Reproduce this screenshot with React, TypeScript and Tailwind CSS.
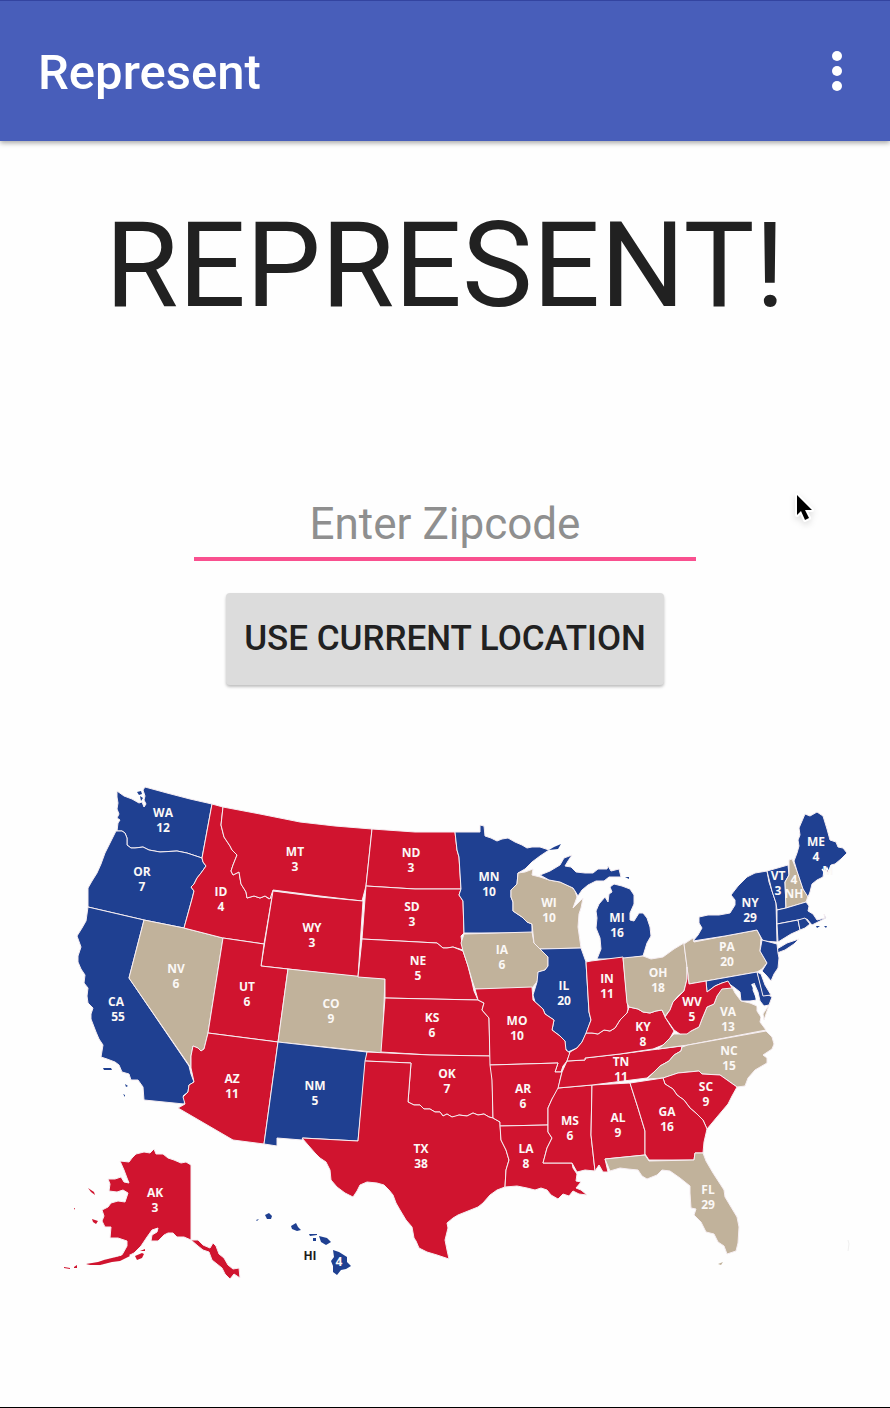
import React from "react";

type Party = "red" | "blue" | "tan";

type Shape = { id: string; party: Party; points: string };

type Label = { name: string; votes: string; x: number; y: number; votesX?: number };

const fills: Record<Party, string> = {
  red: "fill-[#d0142f]",
  blue: "fill-[#1f4091]",
  tan: "fill-[#c1b29b]",
};

const states: Shape[] = [
  { id: "WA", party: "blue", points: "117,791 117,797 118,803 117,809 119,814 117,818 120,820 118,823 117,831 122,831 125,833 127,838 127,845 131,848 135,848 143,847 149,850 160,852 177,851 187,853 202,858 212,804 190,799 167,793 145,787 143,790 145,796 144,800 146,804 144,807 142,802 139,803 132,799 124,796" },
  { id: "OR", party: "blue", points: "116,831 122,831 125,833 127,838 127,845 131,848 135,848 143,847 149,850 160,852 177,851 187,853 202,858 203,862 206,866 201,873 197,878 194,884 191,887 194,891 192,899 184,928 144,920 88,907 88,888 92,881 97,873 101,864 105,853 110,843" },
  { id: "CA", party: "blue", points: "88,907 144,920 129,978 189,1066 191,1074 194,1082 189,1085 188,1092 183,1096 185,1100 184,1104 144,1100 143,1087 138,1080 131,1080 129,1074 122,1072 119,1065 115,1062 107,1059 101,1057 103,1045 99,1039 96,1032 91,1019 91,1014 93,1008 88,1003 87,996 88,988 84,983 85,975 81,969 78,962 78,956 81,947 77,936 82,928 86,921" },
  { id: "NV", party: "tan", points: "144,920 184,928 223,938 208,1033 204,1049 201,1051 198,1048 193,1046 191,1056 191,1068 129,978" },
  { id: "ID", party: "red", points: "212,804 223,807 221,825 224,837 230,846 232,850 237,855 233,865 231,871 233,875 239,872 241,884 246,892 247,898 254,896 260,898 265,896 269,899 273,891 264,944 223,938 184,928 192,899 194,891 191,887 194,884 197,878 201,873 206,866 203,862 202,858" },
  { id: "MT", party: "red", points: "223,807 260,814 300,822 335,826 372,829 366,886 362,901 320,896 273,890 270,899 265,896 260,898 254,896 247,898 246,892 241,884 239,872 233,875 231,871 233,865 237,855 232,850 230,846 224,837 221,825" },
  { id: "WY", party: "red", points: "273,891 320,897 363,901 358,977 288,969 261,966" },
  { id: "UT", party: "red", points: "223,938 264,944 261,966 288,969 278,1042 208,1033" },
  { id: "CO", party: "tan", points: "288,969 385,979 382,1053 278,1042" },
  { id: "AZ", party: "red", points: "208,1033 278,1042 264,1144 233,1140 178,1108 185,1104 183,1097 188,1092 189,1085 194,1082 191,1068 191,1056 193,1046 198,1048 201,1051 204,1049" },
  { id: "NM", party: "blue", points: "278,1042 367,1052 358,1141 303,1138 302,1140 277,1138 277,1146 264,1144" },
  { id: "ND", party: "red", points: "372,829 415,832 455,832 457,850 459,857 461,889 415,889 366,886" },
  { id: "SD", party: "red", points: "366,886 415,889 461,889 459,895 463,901 464,933 461,936 463,950 453,947 447,948 443,948 437,943 362,939" },
  { id: "NE", party: "red", points: "362,939 437,943 443,948 447,948 453,947 463,951 468,966 472,982 474,991 478,1000 385,998 385,979 358,977" },
  { id: "KS", party: "red", points: "385,998 478,1000 484,1003 482,1010 489,1018 490,1056 430,1055 381,1052" },
  { id: "OK", party: "red", points: "367,1052 430,1055 490,1056 492,1067 493,1118 489,1117 484,1114 478,1115 473,1113 467,1116 459,1115 455,1117 452,1117 447,1114 443,1116 440,1112 435,1112 430,1109 424,1109 420,1105 414,1105 408,1102 411,1063 365,1061" },
  { id: "TX", party: "red", points: "365,1061 411,1063 408,1102 414,1105 420,1105 424,1109 430,1109 435,1112 440,1112 443,1116 447,1114 452,1117 459,1115 467,1116 473,1113 478,1115 484,1114 489,1117 493,1118 500,1122 501,1140 506,1150 509,1160 506,1170 505,1187 497,1190 490,1195 483,1203 478,1207 468,1211 458,1215 453,1218 447,1223 448,1228 445,1240 447,1250 449,1259 437,1255 427,1252 419,1248 416,1241 414,1238 412,1227 406,1220 400,1210 396,1203 393,1195 389,1190 384,1185 377,1183 367,1182 360,1185 357,1191 353,1197 345,1193 337,1187 331,1180 330,1170 326,1162 320,1158 315,1153 308,1145 302,1138 358,1141" },
  { id: "MN", party: "blue", points: "455,832 480,832 480,825 484,826 485,836 491,838 497,841 502,839 508,838 515,842 522,845 527,848 532,847 540,847 549,850 540,856 532,862 525,869 518,873 517,884 511,890 511,897 513,902 513,911 522,917 527,922 532,924 532,933 464,933 463,901 459,895 461,889 459,857 457,850" },
  { id: "IA", party: "tan", points: "464,934 532,932 534,943 540,949 548,957 548,966 545,970 538,972 539,978 536,983 532,988 475,989 472,980 468,966 463,951 461,943" },
  { id: "WI", party: "tan", points: "518,873 525,872 533,869 532,875 540,877 549,880 560,882 573,888 575,891 577,897 573,908 580,901 583,898 581,908 579,914 578,927 581,948 540,949 534,943 532,924 527,922 522,917 513,911 513,902 511,897 511,890 517,884" },
  { id: "MI-UP", party: "blue", points: "540,875 550,871 560,865 564,858 572,855 568,861 565,866 571,867 576,872 585,873 593,873 598,869 607,869 608,866 611,871 619,869 621,877 609,877 604,881 596,881 588,885 582,890 578,896 575,891 573,888 560,882 549,880" },
  { id: "MI", party: "blue", points: "597,959 601,949 600,938 596,928 597,918 596,911 599,904 605,897 608,902 609,894 612,892 610,887 614,884 622,886 630,889 634,895 634,904 630,913 630,920 634,921 639,913 643,913 647,918 650,927 651,936 647,943 643,956 623,959" },
  { id: "IL", party: "blue", points: "540,949 581,948 586,962 589,1012 591,1020 586,1034 582,1042 577,1048 568,1052 565,1048 565,1041 560,1036 552,1030 554,1020 545,1014 543,1009 535,1002 533,995 537,982 538,972 545,970 548,966 548,957" },
  { id: "MO", party: "red", points: "475,989 532,987 533,1000 543,1009 545,1014 554,1020 552,1030 560,1036 565,1041 566,1050 570,1053 567,1061 563,1066 561,1072 555,1072 558,1063 490,1065 489,1018 482,1010 484,1003 478,1000" },
  { id: "AR", party: "red", points: "490,1065 558,1063 555,1072 562,1072 560,1080 558,1090 552,1099 548,1108 548,1125 500,1126 500,1122 493,1118 492,1080" },
  { id: "LA", party: "red", points: "500,1126 548,1125 548,1132 552,1138 547,1148 543,1163 572,1163 573,1168 577,1174 576,1181 581,1182 576,1188 581,1190 587,1195 579,1194 573,1191 569,1196 563,1194 558,1199 551,1195 547,1190 541,1188 535,1190 527,1188 517,1186 505,1187 506,1170 509,1160 506,1150 501,1140" },
  { id: "MS", party: "red", points: "558,1088 592,1085 591,1135 595,1171 585,1170 577,1172 572,1163 543,1163 547,1148 552,1138 548,1132 548,1108 552,1099" },
  { id: "AL", party: "red", points: "592,1085 630,1083 638,1108 645,1131 645,1155 605,1159 608,1172 603,1172 599,1165 595,1171 591,1135" },
  { id: "TN", party: "red", points: "567,1061 585,1060 585,1058 620,1054 682,1046 681,1051 674,1055 669,1061 660,1066 654,1072 647,1078 592,1085 558,1088 560,1080 562,1072" },
  { id: "KY", party: "red", points: "570,1052 577,1048 582,1042 586,1033 592,1033 598,1034 604,1030 610,1031 615,1028 620,1020 627,1013 629,1007 638,1009 643,1012 650,1013 656,1011 662,1010 665,1017 670,1025 674,1031 670,1038 663,1045 653,1049 620,1054 585,1058 585,1060 567,1061" },
  { id: "IN", party: "red", points: "586,962 591,961 623,957 628,1009 627,1013 620,1020 615,1028 610,1031 604,1030 598,1034 592,1033 586,1033 591,1020 589,1012" },
  { id: "OH", party: "tan", points: "623,958 643,956 651,959 663,957 674,949 684,943 687,967 687,979 684,991 678,996 673,1002 670,1010 665,1016 662,1010 656,1011 650,1013 643,1012 638,1009 629,1007 627,1003" },
  { id: "PA", party: "tan", points: "684,944 693,938 694,942 725,936 757,930 761,938 760,951 767,963 762,969 757,972 689,984 687,967" },
  { id: "NY", party: "blue", points: "693,941 698,935 702,928 699,923 699,917 708,915 719,915 730,913 735,905 735,900 731,895 738,886 747,877 755,873 767,871 769,882 772,891 776,903 777,942 763,941 757,930 725,936" },
  { id: "LI", party: "blue", points: "777,949 787,943 799,939 794,944 785,950 777,953" },
  { id: "VT", party: "blue", points: "767,871 788,865 789,875 785,882 786,908 777,910 776,903 772,891" },
  { id: "NH", party: "tan", points: "789,860 792,859 797,871 803,889 808,896 806,902 786,908 785,882 789,875" },
  { id: "ME", party: "blue", points: "794,861 797,853 799,846 798,840 800,835 799,828 805,814 810,816 817,812 823,816 827,829 830,840 836,842 838,847 843,848 847,853 841,859 835,864 831,865 829,873 824,870 823,877 817,880 812,884 810,892 808,897 803,889 797,871" },
  { id: "MA", party: "blue", points: "777,910 786,908 806,902 809,906 808,911 813,914 817,920 825,918 824,914 826,918 818,922 812,925 807,919 798,920 777,924" },
  { id: "CT", party: "blue", points: "777,924 798,920 800,930 791,934 778,942" },
  { id: "RI", party: "blue", points: "798,920 805,918 810,924 805,928 800,930" },
  { id: "NJ", party: "blue", points: "762,940 777,944 778,953 779,958 778,968 774,974 771,981 766,975 762,971 767,963 760,951" },
  { id: "MD", party: "blue", points: "706,981 757,972 763,992 772,997 769,1005 764,1006 760,1001 758,992 754,983 753,990 757,1000 750,1001 741,1001 740,992 735,988 728,983 722,983 715,986 707,992" },
  { id: "DE", party: "blue", points: "757,972 761,974 765,985 771,995 763,996" },
  { id: "VA", party: "tan", points: "732,987 735,993 741,1001 750,1003 757,1006 757,1011 761,1017 760,1022 766,1030 688,1045 658,1049 663,1045 674,1034 681,1034 691,1031 699,1027 702,1019 707,1007 714,1004 717,996 722,988" },
  { id: "VA-E", party: "tan", points: "767,1008 769,1005 764,1020 763,1014" },
  { id: "WV", party: "red", points: "687,967 689,984 706,981 707,992 715,986 722,983 728,981 732,988 722,989 717,996 714,1004 707,1007 702,1019 699,1027 691,1031 687,1034 680,1034 674,1030 665,1017 670,1010 673,1002 684,991 687,979" },
  { id: "NC", party: "tan", points: "688,1045 766,1031 772,1037 774,1044 772,1049 763,1055 767,1058 767,1063 755,1070 748,1078 745,1086 737,1087 720,1075 702,1074 699,1071 678,1073 663,1078 647,1079 654,1072 660,1066 669,1061 674,1055 681,1051 682,1047" },
  { id: "SC", party: "red", points: "663,1078 678,1073 699,1071 702,1074 720,1075 737,1087 732,1096 728,1104 717,1117 707,1129 703,1120 697,1114 690,1108 684,1100 677,1095 673,1089 665,1084" },
  { id: "GA", party: "red", points: "630,1083 663,1078 665,1084 673,1089 677,1095 684,1100 690,1108 697,1114 703,1120 707,1129 704,1142 703,1153 695,1153 694,1160 649,1160 645,1154 645,1131 638,1108" },
  { id: "FL", party: "tan", points: "605,1159 645,1155 649,1161 694,1160 695,1153 703,1153 706,1161 713,1173 724,1190 725,1197 731,1207 737,1217 739,1227 738,1243 736,1251 727,1254 724,1246 718,1242 714,1234 706,1232 701,1222 694,1215 696,1209 691,1208 690,1193 690,1186 680,1178 670,1171 662,1170 657,1175 647,1179 642,1176 638,1170 628,1169 620,1168 610,1171" },
  { id: "AK", party: "red", points: "191,1165 186,1162 181,1163 174,1160 168,1158 163,1154 156,1154 154,1149 150,1153 144,1152 136,1154 132,1158 129,1162 120,1161 124,1170 127,1178 129,1183 124,1182 121,1177 115,1179 108,1179 110,1184 109,1191 117,1192 123,1190 128,1193 125,1202 118,1201 111,1203 108,1207 102,1210 104,1216 102,1221 105,1227 111,1227 110,1238 118,1238 127,1241 127,1246 122,1255 113,1258 104,1260 100,1263 87,1264 100,1265 112,1261 118,1260 126,1257 134,1253 141,1246 147,1237 152,1230 158,1228 157,1232 152,1235 151,1241 158,1241 164,1235 168,1233 173,1233 177,1237 184,1237 191,1240 198,1240 203,1245 210,1248 213,1243 216,1246 219,1254 224,1258 228,1265 233,1269 239,1268 240,1278 234,1274 230,1279 225,1274 222,1268 217,1264 212,1260 209,1252 203,1250 198,1246 191,1240" },
];

const islands: Shape[] = [
  { id: "san-juan", party: "blue", points: "137,792 141,791 142,794 139,795" },
  { id: "puget", party: "blue", points: "140,796 143,798 141,801" },
  { id: "royale", party: "blue", points: "549,850 554,847 561,844 558,849" },
  { id: "drummond", party: "blue", points: "625,877 629,877 629,879" },
  { id: "channel-1", party: "blue", points: "103,1068 111,1068 112,1070 104,1070" },
  { id: "channel-2", party: "blue", points: "125,1084 128,1086 126,1087" },
  { id: "channel-3", party: "blue", points: "123,1094 125,1095 125,1097" },
  { id: "vineyard", party: "blue", points: "816,926 820,926 817,928" },
  { id: "nantucket", party: "blue", points: "824,926 827,926 826,928" },
  { id: "keys", party: "tan", points: "718,1264 723,1262 721,1265" },
  { id: "aleutian-3", party: "red", points: "86,1264 92,1263 98,1262 104,1260 112,1258 121,1256 126,1252 130,1256 120,1261 112,1262 100,1265 90,1265" },
  { id: "kodiak", party: "red", points: "135,1256 142,1253 144,1254 142,1258 137,1260" },
  { id: "kodiak-n", party: "red", points: "140,1251 145,1249 145,1251" },
  { id: "nunivak", party: "red", points: "92,1219 98,1221 96,1224 93,1222" },
  { id: "st-lawrence", party: "red", points: "88,1188 91,1190 94,1192 95,1195 91,1192" },
  { id: "pribilof", party: "red", points: "74,1208 75,1208 75,1210" },
  { id: "aleutian-1", party: "red", points: "74,1267 77,1265 77,1268 74,1268" },
  { id: "aleutian-2", party: "red", points: "64,1267 70,1268 70,1269 64,1268" },
  { id: "niihau", party: "blue", points: "256,1220 259,1219 257,1221" },
  { id: "kauai", party: "blue", points: "265,1215 269,1213 272,1216 271,1219 267,1219" },
  { id: "oahu", party: "blue", points: "291,1226 296,1223 298,1227 301,1230 297,1231 292,1229" },
  { id: "molokai", party: "blue", points: "309,1234 317,1234 317,1235 310,1236" },
  { id: "lanai", party: "blue", points: "313,1238 316,1238 316,1241 313,1241" },
  { id: "maui", party: "blue", points: "319,1236 323,1237 327,1238 331,1242 326,1245 321,1242" },
  { id: "hawaii", party: "blue", points: "333,1250 339,1252 347,1257 347,1262 351,1266 346,1269 341,1270 337,1275 333,1272 333,1266 331,1261 334,1257" },
];

const labels: Label[] = [
  { name: "WA", votes: "12", x: 163, y: 817 },
  { name: "OR", votes: "7", x: 142, y: 876 },
  { name: "CA", votes: "55", x: 116, y: 1006, votesX: 118 },
  { name: "NV", votes: "6", x: 176, y: 973 },
  { name: "ID", votes: "4", x: 221, y: 896 },
  { name: "MT", votes: "3", x: 295, y: 856 },
  { name: "WY", votes: "3", x: 312, y: 932 },
  { name: "UT", votes: "6", x: 247, y: 991 },
  { name: "CO", votes: "9", x: 331, y: 1008 },
  { name: "AZ", votes: "11", x: 232, y: 1083 },
  { name: "NM", votes: "5", x: 315, y: 1090 },
  { name: "ND", votes: "3", x: 411, y: 857 },
  { name: "SD", votes: "3", x: 412, y: 911 },
  { name: "NE", votes: "5", x: 418, y: 965 },
  { name: "KS", votes: "6", x: 432, y: 1022 },
  { name: "OK", votes: "7", x: 447, y: 1078 },
  { name: "TX", votes: "38", x: 421, y: 1153 },
  { name: "MN", votes: "10", x: 489, y: 881 },
  { name: "IA", votes: "6", x: 502, y: 954 },
  { name: "WI", votes: "10", x: 549, y: 907 },
  { name: "MI", votes: "16", x: 617, y: 922 },
  { name: "IL", votes: "20", x: 564, y: 990 },
  { name: "IN", votes: "11", x: 607, y: 983 },
  { name: "OH", votes: "18", x: 658, y: 977 },
  { name: "MO", votes: "10", x: 517, y: 1025 },
  { name: "AR", votes: "6", x: 523, y: 1093 },
  { name: "LA", votes: "8", x: 526, y: 1153 },
  { name: "MS", votes: "6", x: 570, y: 1125 },
  { name: "AL", votes: "9", x: 618, y: 1122 },
  { name: "GA", votes: "16", x: 667, y: 1116 },
  { name: "TN", votes: "11", x: 621, y: 1066 },
  { name: "KY", votes: "8", x: 643, y: 1031 },
  { name: "WV", votes: "5", x: 692, y: 1006 },
  { name: "VA", votes: "13", x: 728, y: 1016 },
  { name: "NC", votes: "15", x: 729, y: 1055 },
  { name: "SC", votes: "9", x: 706, y: 1091 },
  { name: "FL", votes: "29", x: 708, y: 1194 },
  { name: "PA", votes: "20", x: 727, y: 951 },
  { name: "NY", votes: "29", x: 750, y: 907 },
  { name: "VT", votes: "3", x: 778, y: 880 },
  { name: "ME", votes: "4", x: 816, y: 846 },
  { name: "AK", votes: "3", x: 155, y: 1197 },
];

function ElectoralMap() {
  return (
    <svg
      viewBox="0 770 890 520"
      role="img"
      aria-label="Electoral votes by state"
      className="block w-full max-w-4xl"
    >
      <g className="stroke-[#f6eef2]" strokeWidth="1" strokeLinejoin="round">
        {states.map((s) => (
          <polygon key={s.id} points={s.points} className={fills[s.party]} />
        ))}
      </g>
      <g>
        {islands.map((s) => (
          <polygon key={s.id} points={s.points} className={fills[s.party]} />
        ))}
        <path d="M848 1240l1 4-1 7" className="fill-none stroke-[#f0f0f0]" />
      </g>
      <path d="M752 984l4 8 1 12 4 8 2 12" className="fill-none stroke-white" strokeWidth="2" />
      <path d="M822 869l3 4 2-5 2 4 2-6 3 1" className="fill-none stroke-white" strokeWidth="1.4" />
      <g
        textAnchor="middle"
        className="fill-[#fbf8f6] font-['Open_Sans',sans-serif] text-[12px] font-bold"
      >
        {labels.map((l) => (
          <React.Fragment key={l.name}>
            <text x={l.x} y={l.y}>{l.name}</text>
            <text x={l.votesX ?? l.x} y={l.y + 15}>{l.votes}</text>
          </React.Fragment>
        ))}
        <text x="794" y="884">4</text>
        <text x="794" y="898">NH</text>
        <text x="828" y="875">M</text>
        <text x="310" y="1260" className="fill-[#1c1c1c]">HI</text>
        <text x="339" y="1266">4</text>
      </g>
    </svg>
  );
}

export default function App() {
  return (
    <div className="relative flex min-h-screen flex-col border-b border-black bg-[#fefefe] font-[Roboto,sans-serif] text-[#212121]">
      <header className="flex h-[141px] items-center justify-between border-t border-[#3344a0] bg-[#485eba] pr-7 pl-9 shadow-[0_2px_5px_rgba(0,0,0,0.35)]">
        <span className="pt-1 pl-0.5 text-[49px] leading-[56px] font-medium text-white">Represent</span>
        <button type="button" aria-label="More options" className="flex h-12 w-12 items-center justify-center text-white">
          <svg viewBox="0 0 12 40" className="h-10 w-3" fill="currentColor" aria-hidden="true">
            <circle cx="5" cy="5" r="5" />
            <circle cx="5" cy="20" r="5" />
            <circle cx="5" cy="35" r="5" />
          </svg>
        </button>
      </header>
      <main className="flex flex-col items-center">
        <h1 className="mt-[50px] text-[119px] leading-[150px]">REPRESENT!</h1>
        <form className="mt-[149px] flex w-full flex-col items-center" onSubmit={(e) => e.preventDefault()}>
          <input
            type="text"
            inputMode="numeric"
            aria-label="Zipcode"
            placeholder="Enter Zipcode"
            className="h-[71px] w-[502px] max-w-full border-b-4 border-[#f9508f] bg-transparent text-center text-[44px] outline-none placeholder:text-[#8f8f8f]"
          />
          <button
            type="button"
            className="mt-8 h-[92px] w-[438px] max-w-full rounded-[4px] bg-[#dcdcdc] text-[35px] font-medium whitespace-nowrap shadow-[0_2px_3px_rgba(0,0,0,0.25)]"
          >
            USE CURRENT LOCATION
          </button>
        </form>
        <div className="mt-[85px] flex w-full justify-center">
          <ElectoralMap />
        </div>
      </main>
      <svg viewBox="0 0 22 32" className="pointer-events-none absolute top-[492px] left-[794px] h-8 w-[22px] drop-shadow-md" aria-hidden="true">
        <path d="M3 3v20l4-4 4 9 4-2-4-8h7z" className="fill-black stroke-white [paint-order:stroke]" strokeWidth="4" strokeLinejoin="round" />
      </svg>
    </div>
  );
}
